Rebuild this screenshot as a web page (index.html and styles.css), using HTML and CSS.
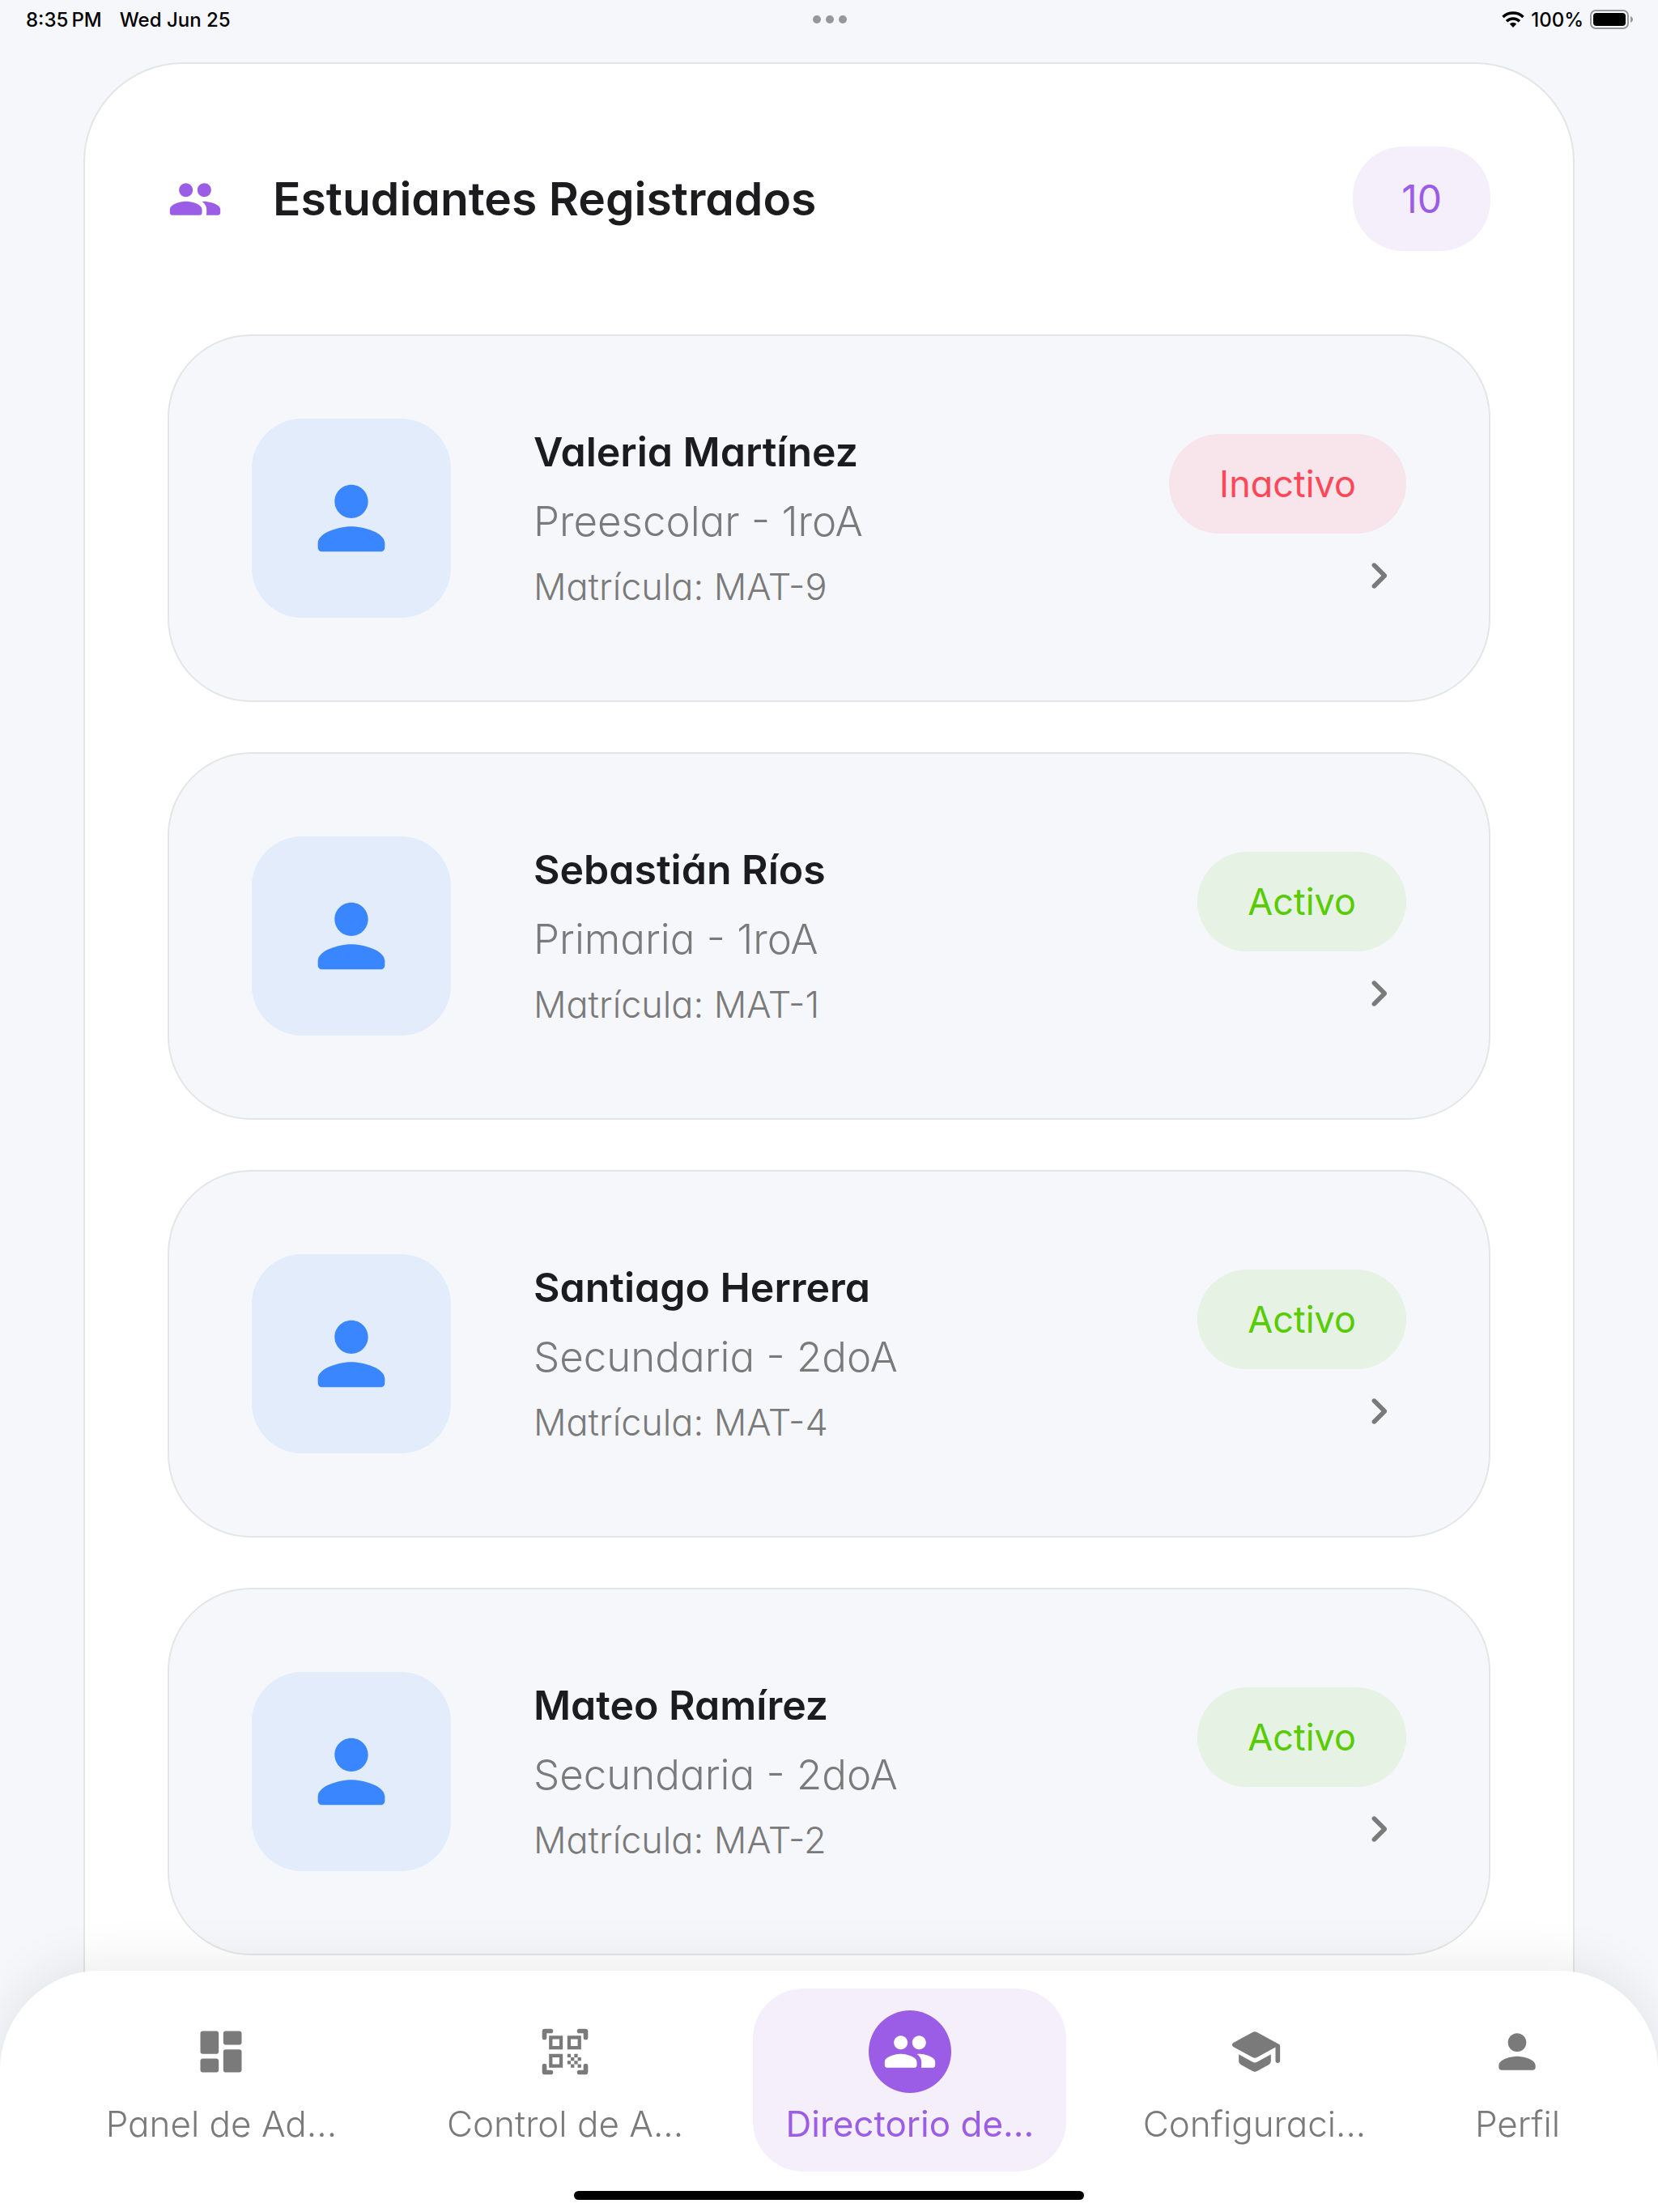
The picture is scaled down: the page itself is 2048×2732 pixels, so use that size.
FILE: index.html
```html
<!DOCTYPE html>
<html lang="es">
<head>
<meta charset="utf-8">
<meta name="viewport" content="width=device-width, initial-scale=1">
<title>Estudiantes Registrados</title>
<link rel="stylesheet" href="styles.css">
</head>
<body>
<svg class="sprite" aria-hidden="true">
  <symbol id="people" viewBox="0 0 24 24"><path d="M16 11c1.66 0 2.99-1.34 2.99-3S17.66 5 16 5s-3 1.34-3 3 1.34 3 3 3zm-8 0c1.66 0 2.99-1.34 2.99-3S9.66 5 8 5 5 6.34 5 8s1.34 3 3 3zm0 2c-2.33 0-7 1.17-7 3.5V18c0 .55.45 1 1 1h12c.55 0 1-.45 1-1v-1.5c0-2.33-4.67-3.5-7-3.5zm8 0c-.29 0-.62.02-.97.05.02.01.03.03.04.04 1.14.83 1.93 1.94 1.93 3.41V18c0 .35-.07.69-.18 1H22c.55 0 1-.45 1-1v-1.5c0-2.33-4.67-3.5-7-3.5z"/></symbol>
  <symbol id="person" viewBox="0 0 24 24"><path d="M12 12c2.21 0 4-1.79 4-4s-1.79-4-4-4-4 1.79-4 4 1.79 4 4 4zm0 2c-2.67 0-8 1.34-8 4v1c0 .55.45 1 1 1h14c.55 0 1-.45 1-1v-1c0-2.66-5.33-4-8-4z"/></symbol>
  <symbol id="chevron" viewBox="0 0 24 24"><path d="M9.29 15.88L13.17 12 9.29 8.12c-.39-.39-.39-1.02 0-1.41.39-.39 1.02-.39 1.41 0l4.59 4.59c.39.39.39 1.02 0 1.41L10.7 17.3c-.39.39-1.02.39-1.41 0-.38-.39-.39-1.03 0-1.42z"/></symbol>
  <symbol id="dashboard" viewBox="0 0 24 24"><path d="M4 13h6c.55 0 1-.45 1-1V4c0-.55-.45-1-1-1H4c-.55 0-1 .45-1 1v8c0 .55.45 1 1 1zm0 8h6c.55 0 1-.45 1-1v-4c0-.55-.45-1-1-1H4c-.55 0-1 .45-1 1v4c0 .55.45 1 1 1zm10 0h6c.55 0 1-.45 1-1v-8c0-.55-.45-1-1-1h-6c-.55 0-1 .45-1 1v8c0 .55.45 1 1 1zM13 4v4c0 .55.45 1 1 1h6c.55 0 1-.45 1-1V4c0-.55-.45-1-1-1h-6c-.55 0-1 .45-1 1z"/></symbol>
  <symbol id="qr" viewBox="0 0 24 24"><path d="M9.5 6.5v3h-3v-3h3M11 5H5v6h6V5zM9.5 14.5v3h-3v-3h3M11 13H5v6h6v-6zM17.5 6.5v3h-3v-3h3M19 5h-6v6h6V5zM13 13h1.5v1.5H13zM14.5 14.5H16V16h-1.5zM16 13h1.5v1.5H16zM13 16h1.5v1.5H13zM14.5 17.5H16V19h-1.5zM16 16h1.5v1.5H16zM17.5 14.5H19V16h-1.5zM17.5 17.5H19V19h-1.5z"/><path d="M3 5.8V3.200q0-.2.200-.2H5.800M18.200 3h2.600q.2 0 .2.200V5.800M21 18.200v2.600q0 .2-.2.200H18.200M5.800 21H3.200q-.2 0-.2-.2V18.200" fill="none" stroke="currentColor" stroke-width="2" stroke-linecap="round"/></symbol>
  <symbol id="school" viewBox="0 0 24 24"><path d="M5 13.18v2.81c0 .73.4 1.41 1.04 1.76l5 2.73c.6.33 1.32.33 1.92 0l5-2.73c.64-.35 1.04-1.03 1.04-1.76v-2.81l-6.04 3.3c-.6.33-1.32.33-1.92 0L5 13.18zm6.04-9.66l-8.43 4.6c-.69.38-.69 1.38 0 1.76l8.43 4.6c.6.33 1.32.33 1.92 0L21 10.09V16c0 .55.45 1 1 1s1-.45 1-1V9.59c0-.37-.2-.7-.52-.88l-9.52-5.19c-.6-.32-1.32-.32-1.92 0z"/></symbol>
</svg>

<header class="status-bar">
  <div class="status-group status-left"><time>8:35&#8201;PM</time><span>Wed Jun 25</span></div>
  <div class="dots" aria-hidden="true"><i></i><i></i><i></i></div>
  <div class="status-group status-right">
    <svg class="wifi" viewBox="0 0 28 20" fill="none" stroke="currentColor"><path d="M1.500 7a18.200 18.200 0 0 1 25 0" fill="none" stroke-width="3.500"/><path d="M6 12.200a11.300 11.300 0 0 1 16 0" fill="none" stroke-width="3.500"/><path d="M14 20l-4.200-4.400a6.500 6.500 0 0 1 8.400 0z" fill="currentColor" stroke="none"/></svg>
    <span>100%</span>
    <svg class="battery" viewBox="0 0 54 24"><rect x="1" y="1" width="46" height="22" rx="6" fill="none" stroke="#97989c" stroke-width="2"/><rect x="4" y="4" width="40" height="16" rx="4" fill="#000"/><path d="M50 8c4 1.500 4 6.500 0 8z" fill="#97989c"/></svg>
  </div>
</header>

<main class="panel">
  <div class="panel-head">
    <svg class="icon panel-icon"><use href="#people"/></svg>
    <h1 class="panel-title">Estudiantes Registrados</h1>
    <span class="count">10</span>
  </div>
  <ul class="students">
    <li><a class="student" href="#mat-9">
      <span class="avatar"><svg class="avatar-icon"><use href="#person"/></svg></span>
      <span class="info"><strong class="name">Valeria Martínez</strong><span class="grade">Preescolar - 1roA</span><span class="code">Matrícula: MAT-9</span></span>
      <span class="state"><span class="badge badge-off">Inactivo</span><svg class="chevron"><use href="#chevron"/></svg></span>
    </a></li>
    <li><a class="student" href="#mat-1">
      <span class="avatar"><svg class="avatar-icon"><use href="#person"/></svg></span>
      <span class="info"><strong class="name">Sebastián Ríos</strong><span class="grade">Primaria - 1roA</span><span class="code">Matrícula: MAT-1</span></span>
      <span class="state"><span class="badge">Activo</span><svg class="chevron"><use href="#chevron"/></svg></span>
    </a></li>
    <li><a class="student" href="#mat-4">
      <span class="avatar"><svg class="avatar-icon"><use href="#person"/></svg></span>
      <span class="info"><strong class="name">Santiago Herrera</strong><span class="grade">Secundaria - 2doA</span><span class="code">Matrícula: MAT-4</span></span>
      <span class="state"><span class="badge">Activo</span><svg class="chevron"><use href="#chevron"/></svg></span>
    </a></li>
    <li><a class="student" href="#mat-2">
      <span class="avatar"><svg class="avatar-icon"><use href="#person"/></svg></span>
      <span class="info"><strong class="name">Mateo Ramírez</strong><span class="grade">Secundaria - 2doA</span><span class="code">Matrícula: MAT-2</span></span>
      <span class="state"><span class="badge">Activo</span><svg class="chevron"><use href="#chevron"/></svg></span>
    </a></li>
  </ul>
</main>

<nav class="tab-bar">
  <div class="tabs">
    <a class="tab" href="#panel"><span class="tab-icon"><svg class="icon"><use href="#dashboard"/></svg></span><span class="tab-label">Panel de Ad...</span></a>
    <a class="tab" href="#control"><span class="tab-icon"><svg class="icon"><use href="#qr"/></svg></span><span class="tab-label">Control de A...</span></a>
    <a class="tab tab-active" href="#directorio" aria-current="page"><span class="tab-icon"><svg class="icon"><use href="#people"/></svg></span><span class="tab-label">Directorio de...</span></a>
    <a class="tab" href="#configuracion"><span class="tab-icon"><svg class="icon"><use href="#school"/></svg></span><span class="tab-label">Configuraci...</span></a>
    <a class="tab tab-short" href="#perfil"><span class="tab-icon"><svg class="icon"><use href="#person"/></svg></span><span class="tab-label">Perfil</span></a>
  </div>
  <div class="home-indicator"></div>
</nav>
</body>
</html>
```

FILE: styles.css
```css
* { box-sizing: border-box; }

body {
  margin: 0;
  min-height: 100vh;
  display: flex;
  flex-direction: column;
  background: #f5f7fb;
  color: #1c1c1e;
  font-family: Inter, "Open Sans", sans-serif;
  font-feature-settings: "cv11";
}

a { color: inherit; text-decoration: none; }
svg { display: block; fill: currentColor; }
.sprite { position: absolute; width: 0; height: 0; }
.icon { width: 68px; height: 68px; }

/* Status bar */
.status-bar {
  display: grid;
  grid-template-columns: 1fr auto 1fr;
  align-items: center;
  height: 48px;
  padding: 0 30px 0 32px;
  color: #000;
  font-size: 24px;
  font-weight: 500;
  font-feature-settings: normal;
}
.status-group { display: flex; align-items: center; }
.status-left { gap: 22px; }
.status-right { justify-content: flex-end; gap: 8px; }
.dots { display: flex; gap: 6px; }
.dots i { width: 10px; height: 10px; border-radius: 50%; background: #96979b; }
.wifi { width: 28px; height: 20px; }
.battery { width: 54px; height: 24px; }

/* Student panel */
.panel {
  flex: 1;
  margin: 29px 103px 0;
  padding: 102px 102px 0;
  background: #fff;
  border: 2px solid #e5e5e7;
  border-bottom: 0;
  border-radius: 123px 123px 0 0;
}
.panel-head {
  display: flex;
  align-items: center;
  gap: 62px;
  margin-bottom: 103px;
}
.panel-icon { color: #9b5de5; }
.panel-title { flex: 1; margin: 0; font-size: 57px; line-height: 84px; font-weight: 600; }
.count {
  padding: 26px 60px;
  border-radius: 62px;
  background: #f5effc;
  color: #9b5de5;
  font-size: 48px;
  line-height: 77px;
}

.students {
  display: flex;
  flex-direction: column;
  gap: 62px;
  margin: 0;
  padding: 0;
  list-style: none;
}
.student {
  display: flex;
  align-items: center;
  gap: 102px;
  padding: 102px;
  border: 2px solid #e5e5e7;
  border-radius: 103px;
  background: #f5f7fb;
}
.avatar {
  display: grid;
  place-items: center;
  width: 246px;
  height: 246px;
  border-radius: 62px;
  background: #e2ecfb;
  color: #3a86ff;
}
.avatar-icon { width: 124px; height: 124px; }
.info { flex: 1; display: flex; flex-direction: column; gap: 8px; }
.name { font-size: 50px; line-height: 77px; font-weight: 600; }
.grade, .code { color: #7a7a7a; font-weight: 300; }
.grade { font-size: 51px; line-height: 77px; }
.code { font-size: 45px; line-height: 70px; }

.state { display: flex; flex-direction: column; align-items: flex-end; gap: 18px; }
.badge {
  padding: 28px 62px;
  border-radius: 62px;
  background: #e6f2e3;
  color: #58cc02;
  font-size: 45px;
  line-height: 67px;
}
.badge-off { background: #f7e5eb; color: #ff4757; }
.chevron { width: 68px; height: 68px; color: #7a7a7a; }

/* Bottom navigation */
.tab-bar {
  position: fixed;
  right: 0;
  bottom: 0;
  left: 0;
  padding: 22px 81px 15px;
  border-radius: 123px 123px 0 0;
  background: #fff;
  box-shadow: 0 -10px 62px rgba(0, 0, 0, 0.08);
}
.tabs { display: flex; justify-content: space-between; gap: 40px; }
.tab {
  flex: 0 1 385px;
  display: flex;
  flex-direction: column;
  align-items: center;
  gap: 5px;
  padding: 27px 40px 25px;
  border-radius: 62px;
  color: #7a7a7a;
  font-weight: 300;
}
.tab-short { flex-basis: 184px; }
.tab-icon {
  display: grid;
  place-items: center;
  width: 102px;
  height: 102px;
  border-radius: 50%;
}
.tab-label { font-size: 44px; line-height: 67px; white-space: nowrap; }
.tab-active { background: #f5effc; color: #9b5de5; font-weight: 400; }
.tab-active .tab-icon { background: #9b5de5; color: #fff; }
.home-indicator {
  width: 630px;
  height: 11px;
  margin: 24px auto 0;
  border-radius: 6px;
  background: #000;
}
```
